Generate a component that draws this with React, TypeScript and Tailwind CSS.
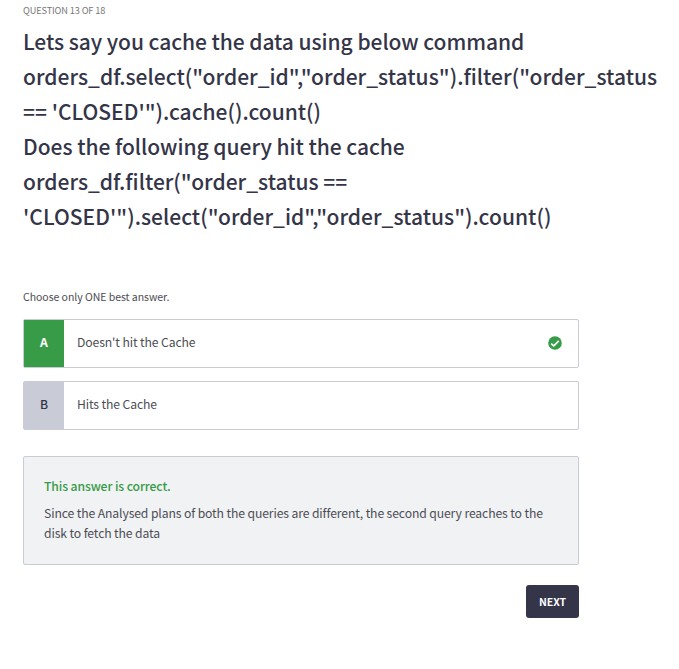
const questionLines = [
  { text: 'Lets say you cache the data using below command', spacing: 'tracking-[-0.05px]' },
  { text: 'orders_df.select("order_id","order_status").filter("order_status', spacing: 'tracking-[0.03px]' },
  { text: "== 'CLOSED'\").cache().count()", spacing: 'tracking-[0px]' },
  { text: 'Does the following query hit the cache', spacing: 'tracking-[-0.03px]' },
  { text: 'orders_df.filter("order_status ==', spacing: 'tracking-[0.01px]' },
  { text: "'CLOSED'\").select(\"order_id\",\"order_status\").count()", spacing: 'tracking-[0.03px]' },
];

function CheckBadge() {
  return (
    <svg className="mr-4 mb-[2px] ml-auto size-[14px]" viewBox="0 0 14 14" aria-hidden="true">
      <circle cx="7" cy="7" r="6.8" fill="#389b48" />
      <path d="M3.2 7.6 5.8 9.9 10.8 4.9" fill="none" stroke="#fff" strokeWidth="1.6" />
    </svg>
  );
}

function Answer({ letter, text, correct = false }: { letter: string; text: string; correct?: boolean }) {
  return (
    <li className="flex h-[49px] items-center rounded-[2px] border border-[#c9cbd6] bg-white">
      <span
        className={
          correct
            ? 'flex h-full w-10 items-center justify-center bg-[#389b48] pb-[2px] text-[12.2px] font-bold text-white'
            : 'flex h-full w-10 items-center justify-center bg-[#c9cbd6] pb-[2px] text-[12.2px] font-medium text-[#343548]'
        }
      >
        {letter}
      </span>
      <span className="ml-[13px] pb-[2px] text-[12.2px] tracking-[-0.12px] whitespace-nowrap">{text}</span>
      {correct && <CheckBadge />}
    </li>
  );
}

export default function App() {
  return (
    <main className="h-[669px] overflow-hidden bg-white pl-[23px] text-[#4c4d54] [font-family:'Noto_Sans_CJK_SC',sans-serif]">
      <p className="pt-[2px] text-[9.2px] leading-[16px] tracking-[-0.12px] text-[#777]">QUESTION 13 OF 18</p>
      <h1 className="mt-[6px] text-[21px] leading-[35px] font-medium text-[#343548]">
        {questionLines.map((line) => (
          <span key={line.text} className={`block whitespace-nowrap ${line.spacing}`}>
            {line.text}
          </span>
        ))}
      </h1>
      <section className="w-[556px]">
        <p className="mt-[53px] text-[10.5px] leading-5 tracking-[-0.04px]">Choose only ONE best answer.</p>
        <ul className="mt-3 flex flex-col gap-[13px]">
          <Answer letter="A" text="Doesn't hit the Cache" correct />
          <Answer letter="B" text="Hits the Cache" />
        </ul>
        <div className="mt-[26px] h-[109px] rounded-[2px] border border-[#c9cbd6] bg-[#f1f2f4] px-5 pt-[19px]">
          <p className="text-[12.2px] leading-5 font-medium tracking-[-0.11px] text-[#389b48]">This answer is correct.</p>
          <p className="mt-[7px] text-[12.2px] leading-5 tracking-[-0.12px] whitespace-nowrap">
            Since the Analysed plans of both the queries are different, the second query reaches to the
            <br />
            disk to fetch the data
          </p>
        </div>
        <button className="mt-5 ml-auto flex h-[33px] w-[53px] items-center justify-center rounded-[3px] bg-[#343548] text-[10.5px] font-bold tracking-[-0.1px] text-white">
          NEXT
        </button>
      </section>
    </main>
  );
}
